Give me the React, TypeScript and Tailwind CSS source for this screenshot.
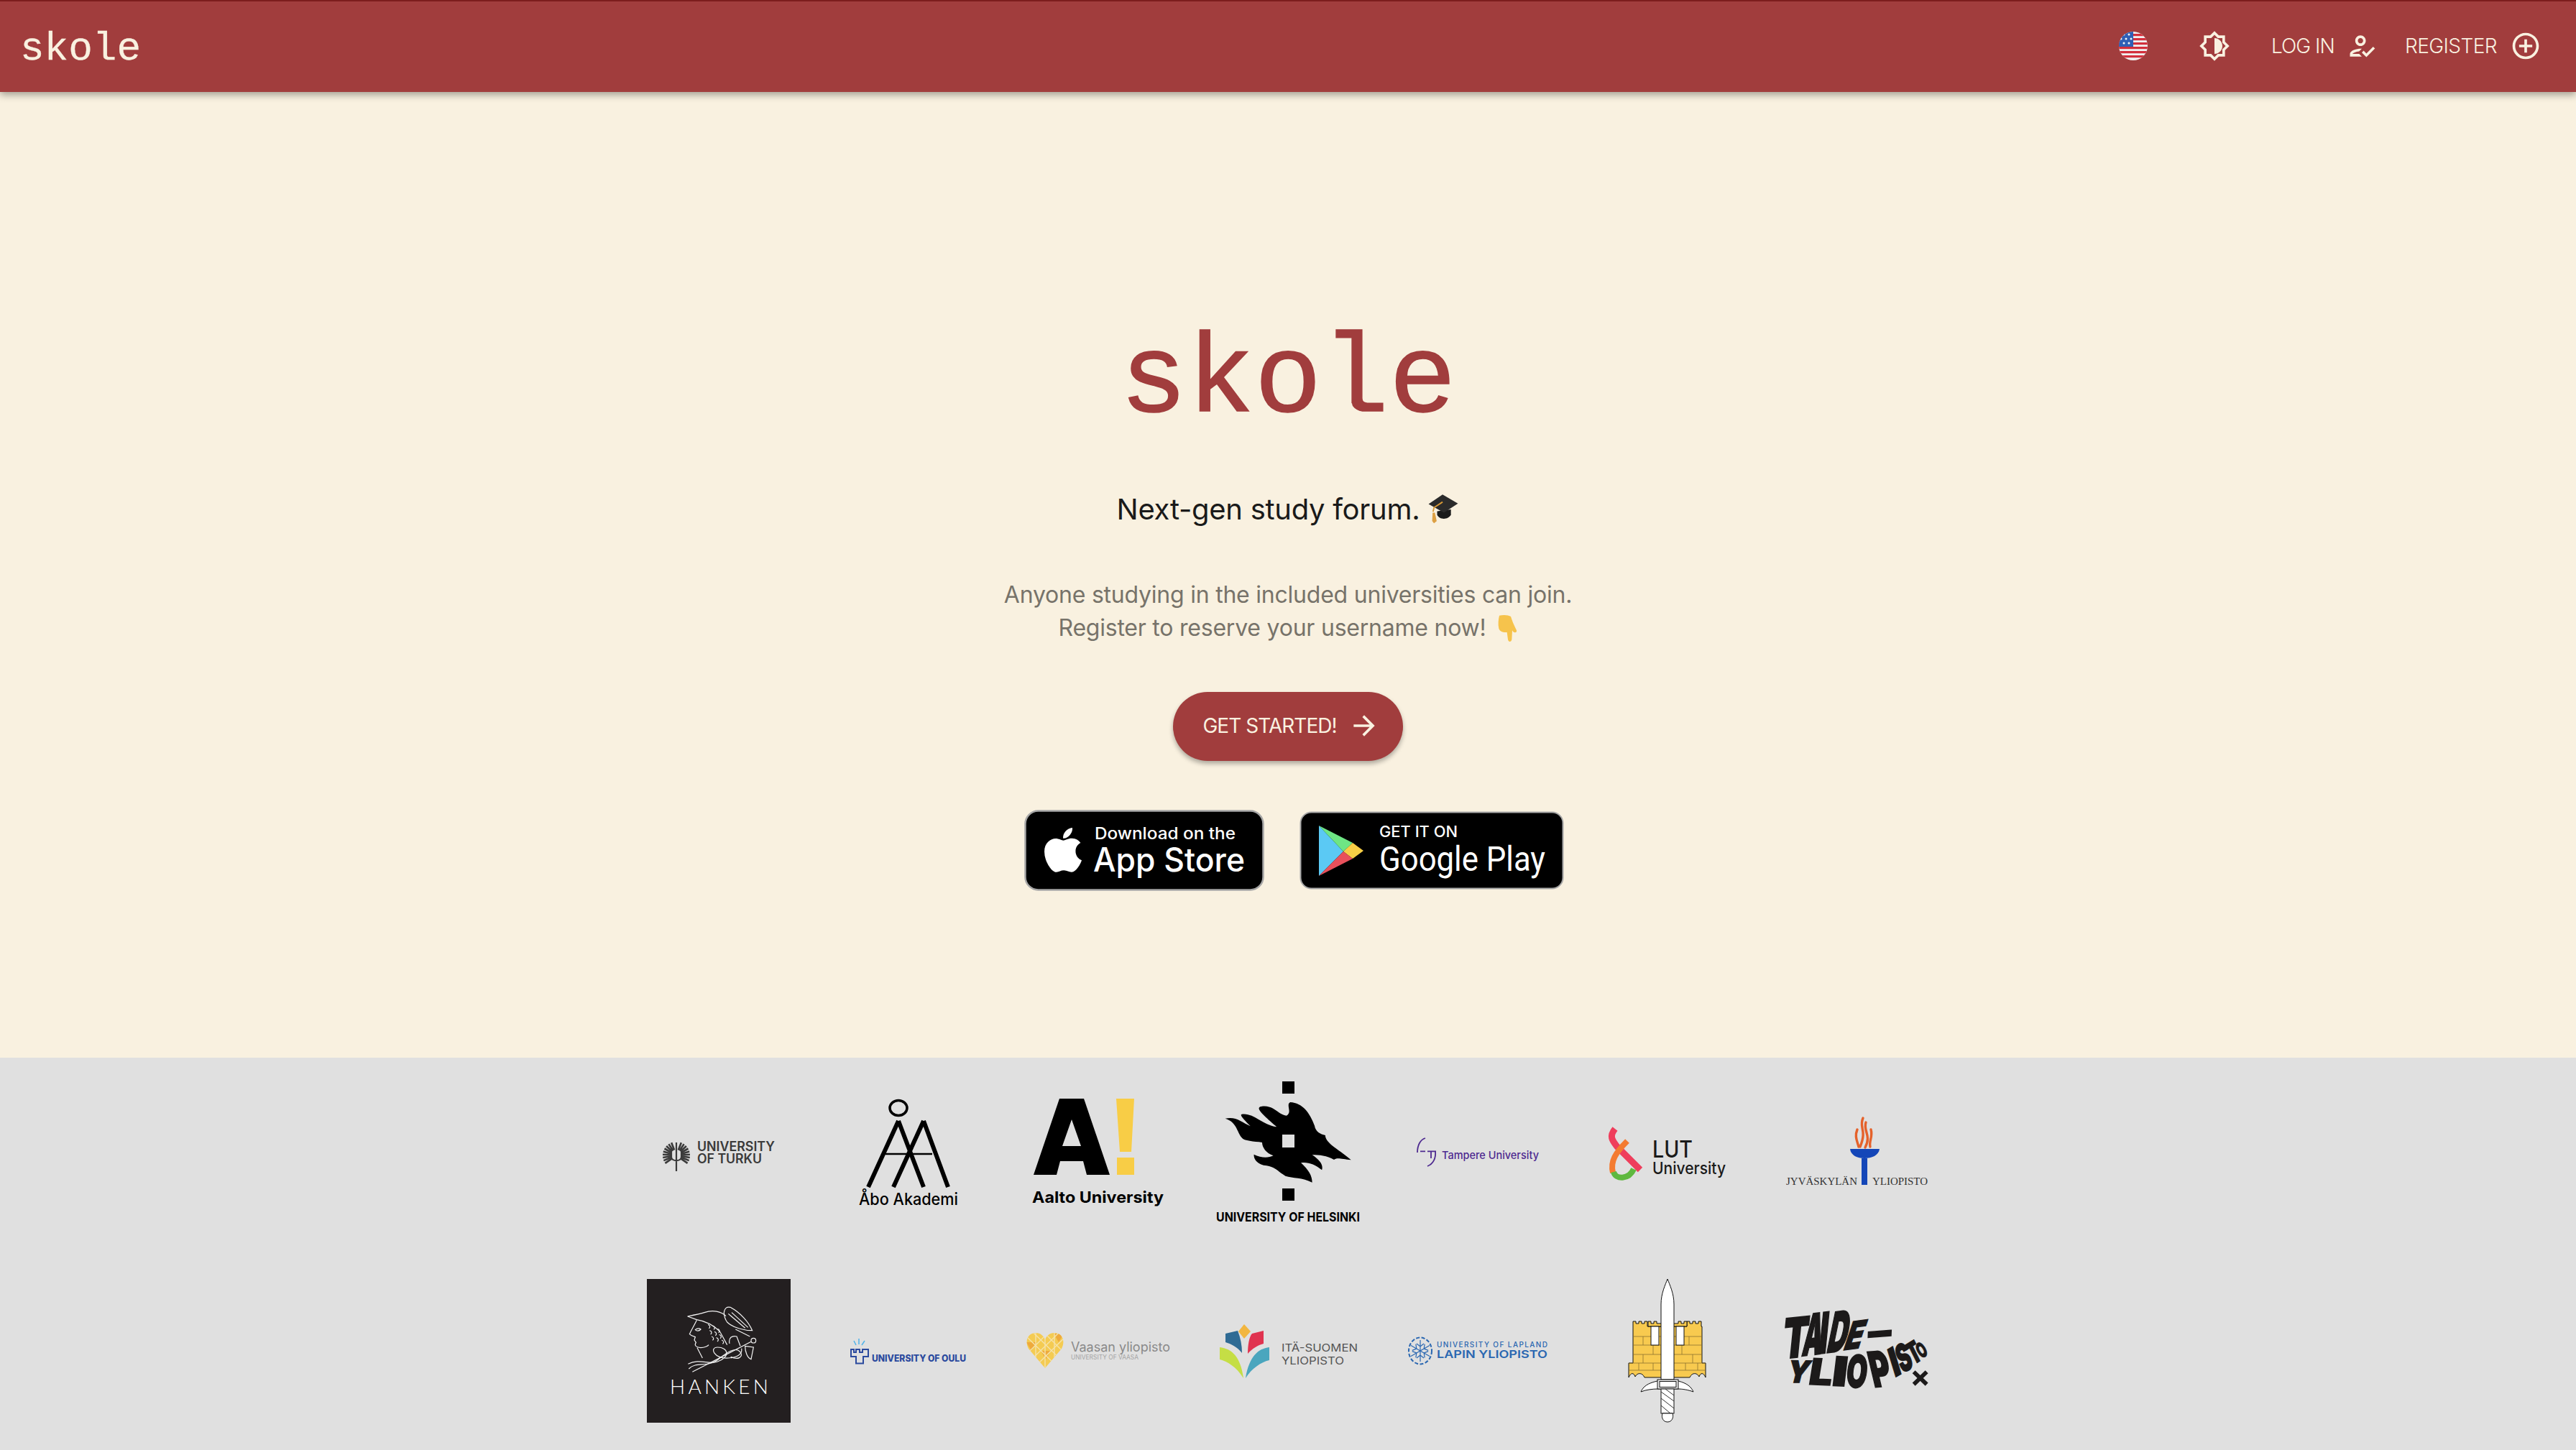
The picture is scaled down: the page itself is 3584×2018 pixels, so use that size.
function MuiIcon({ d, className }: { d: string; className?: string }) {
  return (
    <svg viewBox="0 0 24 24" className={className} fill="currentColor">
      <path d={d} />
    </svg>
  );
}

function FlagIcon() {
  return (
    <svg viewBox="0 0 40 40" className="w-10 h-10">
      <defs>
        <clipPath id="flag-round">
          <circle cx="20" cy="20" r="20" />
        </clipPath>
      </defs>
      <g clipPath="url(#flag-round)">
        <rect width="40" height="40" fill="#f0f0f0" />
        {[3, 9, 15, 21, 27, 33].map((y) => (
          <rect key={y} x="0" y={y} width="40" height="3.2" fill="#d32f3c" />
        ))}
        <rect width="20" height="21" fill="#2f5fb5" />
        {[
          [7, 4], [14, 4], [3, 10], [10, 10], [17, 10], [7, 16], [14, 16],
        ].map(([x, y]) => (
          <circle key={x + "-" + y} cx={x} cy={y} r="1.5" fill="#f4f4f4" />
        ))}
      </g>
    </svg>
  );
}

function CapEmoji() {
  return (
    <svg viewBox="33 18 140 140" className="w-[44px] h-[44px]">
      <path d="M76 96 L76 112 C85 135 125 135 137 112 L137 88 Z" fill="#1b1b1b" />
      <path d="M38 64 L100 22 L168 62 L106 102 Z" fill="#2b2b2b" />
      <path d="M100 55 L62 80 L58 98" fill="none" stroke="#d99a36" strokeWidth="6" />
      <path d="M56 102 L66 102 L74 140 L62 149 L54 140 Z" fill="#dda043" />
    </svg>
  );
}

function HandEmoji() {
  return (
    <svg viewBox="40 22 90 120" className="w-[30px] h-[40px]">
      <path
        d="M52 30 C68 26 90 27 100 34 C104 48 112 68 124 92 C126 100 118 104 110 98 L106 92 L104 130 C102 142 90 142 88 130 L84 100 C70 100 54 98 50 84 C46 66 48 46 52 30 Z"
        fill="#f6c34c"
      />
    </svg>
  );
}

function AppStoreBadge() {
  return (
    <svg width="334" height="113" viewBox="0 0 334 113">
      <rect x="1.5" y="1.5" width="331" height="110" rx="18" fill="#000" stroke="#a6a6a6" strokeWidth="2.5" />
      <path
        transform="translate(27.5 20.6) scale(0.138)"
        fill="#fff"
        d="M318.7 268.7c-.2-36.7 16.4-64.4 50-84.8-18.8-26.9-47.2-41.7-84.7-44.6-35.5-2.8-74.3 20.7-88.5 20.7-15 0-49.4-19.7-76.4-19.7C63.3 141.2 4 184.8 4 273.5q0 39.3 14.4 81.2c12.8 36.7 59 126.7 107.2 125.2 25.2-.6 43-17.9 75.8-17.9 31.8 0 48.3 17.9 76.4 17.9 48.6-.7 90.4-82.5 102.6-119.3-65.2-30.7-61.7-90-61.7-91.9zm-56.6-164.2c27.3-32.4 24.8-61.9 24-72.5-24.1 1.4-52 16.4-67.9 34.9-17.5 19.8-27.8 44.3-25.6 71.9 26.1 2 49.9-11.4 69.5-34.3z"
      />
      <text x="98" y="41" fontSize="23" fontWeight="500" fill="#fff" fontFamily="Inter, sans-serif" textLength="196" lengthAdjust="spacingAndGlyphs">
        Download on the
      </text>
      <text x="96" y="86" fontSize="46" fontWeight="500" fill="#fff" fontFamily="Inter, sans-serif" textLength="211" lengthAdjust="spacingAndGlyphs">
        App Store
      </text>
    </svg>
  );
}

function GooglePlayBadge() {
  return (
    <svg width="368" height="109" viewBox="0 0 368 109">
      <rect x="1.5" y="1.5" width="365" height="106" rx="15" fill="#000" stroke="#a6a6a6" strokeWidth="2" />
      <path d="M27 20 L61 56 L27 90 Z" fill="#5bc9f4" />
      <path d="M27 20 L74 44 L61 56 Z" fill="#6ee584" />
      <path d="M74 44 L89 55 L74 66 L61 56 Z" fill="#f7ce46" />
      <path d="M27 90 L61 56 L74 66 Z" fill="#e8505b" />
      <text x="111" y="36" fontSize="22" fontWeight="500" fill="#fff" fontFamily="Inter, sans-serif" textLength="109" lengthAdjust="spacingAndGlyphs">
        GET IT ON
      </text>
      <text x="111" y="83" fontSize="48" fill="#fff" fontFamily="Roboto, sans-serif" textLength="231" lengthAdjust="spacingAndGlyphs">
        Google Play
      </text>
    </svg>
  );
}

// text inside a logo, stretched to the width it has in the picture
function LogoText({ x, y, w, size, children, color = "#000", weight = 400, font = "Inter, sans-serif", adjust = "spacingAndGlyphs" }: {
  x: number; y: number; w: number; size: number; children: string; color?: string; weight?: number; font?: string;
  adjust?: "spacing" | "spacingAndGlyphs";
}) {
  return (
    <text x={x} y={y} fontSize={size} fontWeight={weight} fill={color} fontFamily={font} textLength={w} lengthAdjust={adjust}>
      {children}
    </text>
  );
}

function TurkuLogo() {
  const angles = [-125, -112, -99, -86, -73, -60, -47, -34, -21, 21, 34, 47, 60, 73, 86, 99, 112, 125];
  return (
    <>
      <g stroke="#3a3a3a" strokeWidth="2.6">
        {angles.map((a) => (
          <line key={a} x1="41" y1="96" x2="41" y2="85" transform={`rotate(${a} 41 104)`} />
        ))}
      </g>
      <path d="M41 86 V126 M34 94 V106 C34 113 48 113 48 106 V94" fill="none" stroke="#3a3a3a" strokeWidth="2.2" />
      <LogoText x={70} y={98} w={108} size={18} weight={600} color="#3a3a3a">UNIVERSITY</LogoText>
      <LogoText x={70} y={115} w={90} size={18} weight={600} color="#3a3a3a">OF TURKU</LogoText>
    </>
  );
}

function AboLogo() {
  return (
    <>
      <ellipse cx="86" cy="38" rx="12" ry="10.5" fill="none" stroke="#000" strokeWidth="3.5" />
      <path d="M86 56 L44 148 M86 56 L121 148 M121 56 L79 148 M121 56 L155 148" stroke="#000" strokeWidth="6" />
      <path d="M68 102 H133" stroke="#000" strokeWidth="2.5" />
      <LogoText x={31} y={173} w={138} size={23} weight={500}>Åbo Akademi</LogoText>
    </>
  );
}

function AaltoLogo() {
  return (
    <>
      <path
        fillRule="evenodd"
        d="M46 25 H80 L116 131 H84 L79 112 H47 L42 131 H10 Z M63 54 L50 91 H76 Z"
        fill="#000"
      />
      <path d="M125 25 H150 L146 99 H130 Z M126 107 H150 V131 H126 Z" fill="#f8cd46" />
      <LogoText x={8} y={170} w={183} size={22} weight={700}>Aalto University</LogoText>
    </>
  );
}

function HelsinkiLogo() {
  return (
    <>
      <rect x="92" y="1" width="17" height="17" fill="#000" />
      <rect x="92" y="150" width="17" height="17" fill="#000" />
      <g transform="translate(-32 -24) scale(0.676 0.3333)">
        <path
          d="M66 230 C88 220 100 245 118 262 C105 235 95 215 100 212 C125 205 140 255 172 265 C150 225 125 185 140 180 C165 170 175 215 192 218 C205 205 190 170 200 162 C225 165 240 205 250 260 C252 285 262 295 272 300 C272 335 305 365 325 403 C305 398 295 392 290 402 C275 385 260 382 245 382 C262 405 268 425 265 445 C250 420 235 410 222 415 C238 445 245 470 245 497 C225 475 205 480 190 470 C170 445 170 430 145 425 C130 415 125 400 125 380 C140 395 155 395 165 385 C150 375 142 350 142 330 C125 325 105 325 100 310 C90 285 90 245 66 230 Z"
          fill="#000"
        />
      </g>
      <rect x="92" y="75" width="17" height="18" fill="#e0e0e0" />
      <LogoText x={0} y={196} w={200} size={18} weight={700}>UNIVERSITY OF HELSINKI</LogoText>
    </>
  );
}

function TampereLogo() {
  return (
    <>
      <g fill="none" stroke="#4e2a90" strokeWidth="1.8">
        <path d="M27 80 C20 82 16 90 16 100" />
        <path d="M20 98.3 H27 M30 98.3 H42 M35 98.3 V108" />
        <path d="M41 98.3 C42 108 38 116 30 119" />
      </g>
      <LogoText x={50} y={109} w={135} size={15} weight={500} color="#4e2a90">Tampere University</LogoText>
    </>
  );
}

function LutLogo() {
  return (
    <>
      <path d="M27 67 C18 78 24 84 30 92 L62 124" fill="none" stroke="#ef3e5c" strokeWidth="9" />
      <path d="M44 84 C28 100 20 112 24 128" fill="none" stroke="#f47b30" strokeWidth="8" />
      <path d="M25 127 C28 138 46 138 53 123" fill="none" stroke="#5fb83f" strokeWidth="8" />
      <LogoText x={79} y={107} w={56} size={32} weight={500} color="#1a1a1a">LUT</LogoText>
      <LogoText x={79} y={130} w={102} size={23} weight={500} color="#1a1a1a">University</LogoText>
    </>
  );
}

function JyvaskylaLogo() {
  return (
    <>
      <g fill="none" stroke="#e5622b" strokeWidth="3.4" strokeLinecap="round">
        <path d="M108 52 C102 66 114 68 104 92" />
        <path d="M112 58 C108 70 120 76 111 93" />
        <path d="M119 68 C122 78 116 84 118 92" />
        <path d="M100 68 C96 78 100 84 102 92" />
      </g>
      <path d="M90 95 H131 C130 104 120 108 110 108 C100 108 91 104 90 95 Z" fill="#1446b8" />
      <rect x="106" y="108" width="8" height="37" fill="#1446b8" />
      <LogoText x={1} y={145} w={99} size={15.5} color="#333" font="'Liberation Serif', serif">JYVÄSKYLÄN</LogoText>
      <LogoText x={121} y={145} w={77} size={15.5} color="#333" font="'Liberation Serif', serif">YLIOPISTO</LogoText>
    </>
  );
}

function HankenLogo() {
  return (
    <>
      <rect width="200" height="200" fill="#231f20" />
      <g transform="translate(30 30) scale(0.3333)" fill="none" stroke="#f2f2f2" strokeWidth="3.6">
        <path d="M80 66 L118 80 C150 85 185 100 215 130 L245 185" />
        <path d="M80 66 C110 60 135 55 150 50 C185 38 220 45 240 65" />
        <path d="M232 50 C235 30 245 25 258 28 C300 50 335 90 350 125 C320 125 270 115 245 90 C235 75 232 60 232 50 Z" />
        <path d="M250 55 L320 115 M264 50 L332 112" />
        <path d="M118 82 C110 100 100 115 88 140 C95 148 105 150 112 152 L108 165 L115 175 C108 185 112 195 135 197 C150 197 165 190 168 185" />
        <path d="M112 122 C120 115 130 115 135 120 C128 128 118 128 112 122 Z" />
        <path d="M120 197 L142 240" />
        <path d="M165 100 c10 3 10 12 4 16 M185 105 c10 3 10 12 4 16 M205 118 c10 3 10 12 4 16 M172 125 c10 3 10 12 4 16 M192 130 c10 3 10 12 4 16 M212 142 c10 3 10 12 4 16 M180 150 c10 3 10 12 4 16 M200 155 c10 3 10 12 4 16 M222 165 c10 3 10 12 4 16" />
        <path d="M100 298 L345 172" />
        <circle cx="355" cy="167" r="10" />
        <path d="M82 265 C130 240 170 270 205 255 C260 235 250 195 205 195 C170 195 190 245 250 240 C285 238 310 225 305 200" />
        <path d="M85 285 C120 250 165 285 215 240 C240 220 280 190 300 215 C315 235 290 250 260 235" />
        <path d="M280 120 L340 150 M255 180 C250 155 265 145 285 150 L300 190 M320 190 L355 195 L345 245 C330 240 320 215 320 190 Z" />
      </g>
      <LogoText x={32} y={160} w={137} size={28} weight={300} color="#fff" font="Lato, sans-serif" adjust="spacing">HANKEN</LogoText>
    </>
  );
}

function OuluLogo() {
  return (
    <>
      <path d="M20 98 H24 V102 H27 V98 H32 V102 H36 V98 H44 V108 H37 V117.5 H27 V108 H20 Z" fill="none" stroke="#2b4a9e" strokeWidth="2" />
      <path d="M24 86 L27 92 M31 83 V91 M39 86 L35 92" stroke="#4fb3ea" strokeWidth="1.5" />
      <LogoText x={49} y={115} w={131} size={12.5} weight={800} color="#2b4a9e">UNIVERSITY OF OULU</LogoText>
    </>
  );
}

function VaasaLogo() {
  return (
    <>
      <defs>
        <clipPath id="vaasa-heart">
          <path d="M26 124 L3 97 C-3 85 3 75 13 75 C20 75 25 80 26 85 C27 80 32 75 39 75 C49 75 55 85 49 97 Z" />
        </clipPath>
      </defs>
      <g clipPath="url(#vaasa-heart)">
        <rect width="60" height="130" y="0" fill="#f4cb52" />
        <path d="M0 88 H14 L7 100 Z M38 76 H52 L45 88 Z M20 100 H34 L27 112 Z" fill="#eeaa3c" />
        <g stroke="#f5e2a8" strokeWidth="1.4">
          <path d="M-5 75 L45 124 M10 75 L60 124 M-15 85 L35 135 M25 75 L65 115" />
          <path d="M60 75 L10 124 M45 75 L-5 124 M30 75 L-15 120 M65 90 L25 130" />
          <path d="M13 70 V130 M26 70 V130 M39 70 V130" />
        </g>
      </g>
      <LogoText x={62} y={101} w={138} size={18} color="#8a8a8a">Vaasan yliopisto</LogoText>
      <LogoText x={62} y={112} w={94} size={9} color="#a5a5a5">UNIVERSITY OF VAASA</LogoText>
    </>
  );
}

function ItaSuomenLogo() {
  return (
    <>
      <path d="M39 63 L48 73 L39 83 L31 73 Z" fill="#f2b63f" />
      <path d="M13 76 L30 72 C34 82 36 92 36 103 C30 95 20 90 13 88 Z" fill="#2f6b94" />
      <path d="M66 72 L66 90 C58 92 50 97 44 104 C44 92 46 80 50 76 Z" fill="#e0334f" />
      <path d="M5 95 C22 97 34 108 38 138 C28 122 16 115 5 112 Z" fill="#c5de45" />
      <path d="M74 95 C58 97 46 108 41 138 C50 124 62 116 74 113 Z" fill="#4aa6be" />
      <LogoText x={91} y={101} w={106} size={15} color="#555">ITÄ-SUOMEN</LogoText>
      <LogoText x={91} y={119} w={87} size={15} color="#555">YLIOPISTO</LogoText>
    </>
  );
}

function LapinLogo() {
  return (
    <>
      <g fill="none" stroke="#2a67b1" strokeWidth="1.2">
        <ellipse cx="20" cy="100" rx="16" ry="18.5" strokeDasharray="5 2.5" strokeWidth="2" />
        {[0, 60, 120, 180, 240, 300].map((a) => (
          <path key={a} transform={`rotate(${a} 20 100)`} d="M20 100 V85 M15 90 L20 94 L25 90" />
        ))}
      </g>
      <LogoText x={43} y={95} w={154} size={10} weight={500} color="#2a67b1" adjust="spacing">UNIVERSITY OF LAPLAND</LogoText>
      <LogoText x={43} y={110} w={154} size={15} weight={600} color="#2a67b1">LAPIN YLIOPISTO</LogoText>
    </>
  );
}

function SwordLogo() {
  return (
    <g stroke="#111" strokeWidth="1">
      <path
        d="M52 59 H56 V62 H60 V59 H64 V62 H68 V59 H72 V66 H127 V59 H131 V62 H135 V59 H139 V62 H143 V59 H147 V66 H148 V117 H153 V137 C150 130 146 130 144 136 C141 130 134 130 131 137 H68 C65 130 58 130 55 136 C53 130 49 130 46 137 V117 H52 Z"
        fill="#f8ca4f"
      />
      <path d="M73 59 V66 H127 V59 H123 V62 H119 V59 H115 V62 H85 V59 H81 V62 H77 V59 Z" fill="#f8ca4f" />
      <g fill="none" stroke="#8b7230" strokeWidth="0.8">
        <path d="M52 80 H148 M52 92 H148 M52 105 H148 M46 117 H153 M46 127 H153 M66 80 V92 M80 92 V105 M66 105 V117 M130 80 V92 M120 92 V105 M135 105 V117 M60 117 V127 M80 117 V127 M125 117 V127 M142 117 V127" />
      </g>
      <rect x="77" y="66" width="11" height="26" fill="#fff" />
      <rect x="112" y="66" width="11" height="26" fill="#fff" />
      <path d="M100 0 C103 8 109 20 109 35 V140 H91 V35 C91 20 97 8 100 0 Z" fill="#fff" />
      <path d="M63 157 C66 150 72 145 86 142 H115 C127 145 133 150 136 157 C128 154 120 153 115 153 H86 C80 153 70 154 63 157 Z" fill="#fff" />
      <rect x="86" y="140" width="29" height="13" fill="#ececec" />
      <rect x="89" y="142.5" width="23" height="8" fill="#fff" />
      <rect x="91" y="153" width="18" height="34" fill="#fff" />
      <path d="M91 157 L109 170 M91 166 L109 180 M91 176 L104 187 M97 153 L109 162" fill="none" stroke="#333" />
      <path d="M93 187 H107 C109 193 106 199 100 199 C94 199 91 193 93 187 Z" fill="#fff" />
    </g>
  );
}

// every letter stretched between three corners of its box, as the logo warps its letters
const taideLetters: [string, number, number, number, number, number, number][] = [
  ["T", 25, 243, 131, 232, 42, 75],
  ["A", 108, 232, 190, 222, 131, 58],
  ["I", 178, 222, 214, 218, 195, 50],
  ["D", 210, 218, 292, 208, 245, 48],
  ["E", 280, 208, 352, 198, 320, 88],
  ["-", 370, 190, 498, 180, 375, 75],
  ["Y", 42, 342, 134, 343, 65, 250],
  ["L", 135, 350, 232, 354, 153, 240],
  ["I", 232, 355, 296, 358, 247, 232],
  ["O", 290, 358, 376, 368, 307, 222],
  ["P", 412, 362, 495, 355, 377, 215],
  ["I", 498, 322, 530, 303, 463, 208],
  ["S", 530, 305, 580, 275, 490, 198],
  ["T", 575, 270, 620, 242, 535, 190],
  ["O", 610, 245, 642, 222, 578, 190],
];

function TaideLogo() {
  return (
    <g transform="translate(-14 30) scale(0.3333)">
      {taideLetters.map(([c, blx, bly, brx, bry, tlx, tly], i) => (
        <text
          key={i}
          fontSize="100"
          fontWeight="900"
          fontFamily="Inter, sans-serif"
          fill="#1c1a1a"
          stroke="#1c1a1a"
          strokeWidth="3"
          textLength="100"
          lengthAdjust="spacingAndGlyphs"
          transform={`matrix(${(brx - blx) / 100} ${(bry - bly) / 100} ${(blx - tlx) / 73} ${(bly - tly) / 73} ${blx} ${bly})`}
        >
          {c}
        </text>
      ))}
      <path d="M578 298 L632 350 M632 298 L578 350" stroke="#1c1a1a" strokeWidth="17" />
    </g>
  );
}

const logos = [
  TurkuLogo, AboLogo, AaltoLogo, HelsinkiLogo, TampereLogo, LutLogo, JyvaskylaLogo,
  HankenLogo, OuluLogo, VaasaLogo, ItaSuomenLogo, LapinLogo, SwordLogo, TaideLogo,
];

export default function App() {
  return (
    <div className="h-screen overflow-hidden flex flex-col bg-[#e0e0e0] font-['Inter',sans-serif]">
      <header className="relative z-10 h-[128px] shrink-0 flex items-center justify-between border-t-2 border-[#7c1d1d] bg-[#a13d3d] pb-[2px] pl-[28px] pr-[48px] text-[#f9f1e0] shadow-[0_4px_10px_rgba(0,0,0,0.35)]">
        <span className="mt-[7px] font-['Liberation_Mono',monospace] text-[56px] leading-none [-webkit-text-stroke:0.3px_#f9f1e0]">skole</span>
        <nav className="flex items-center text-[28px] font-light">
          <FlagIcon />
          <MuiIcon
            className="ml-[71px] w-[44px] h-[44px]"
            d="M20 15.31L23.31 12 20 8.69V4h-4.69L12 .69 8.69 4H4v4.69L.69 12 4 15.31V20h4.69L12 23.31 15.31 20H20v-4.69zm-2-.83V18h-3.52L12 20.48 9.52 18H6v-3.52L3.52 12 6 9.52V6h3.52L12 3.52 14.48 6H18v3.52L20.48 12 18 14.48zM12 6v12c3.31 0 6-2.69 6-6s-2.69-6-6-6z"
          />
          <span className="ml-[57px] w-[85px] whitespace-nowrap tracking-[-0.035em]">LOG IN</span>
          <MuiIcon
            className="ml-[19px] w-[44px] h-[44px]"
            d="M11 12c2.21 0 4-1.79 4-4s-1.79-4-4-4-4 1.79-4 4 1.79 4 4 4zm0-6c1.1 0 2 .9 2 2s-.9 2-2 2-2-.9-2-2 .9-2 2-2zM5 18c.2-.63 2.57-1.68 4.96-1.94l2.04-2c-.39-.04-.68-.06-1-.06-2.67 0-8 1.34-8 4v2h9l-2-2H5zm15.6-5.5l-5.13 5.17-2.07-2.08L12 17l3.47 3.5L22 13.91z"
          />
          <span className="ml-[38px] w-[129px] whitespace-nowrap tracking-[-0.02em]">REGISTER</span>
          <MuiIcon
            className="ml-[17px] w-[44px] h-[44px]"
            d="M13 7h-2v4H7v2h4v4h2v-4h4v-2h-4V7zm-1-5C6.48 2 2 6.48 2 12s4.48 10 10 10 10-4.48 10-10S17.52 2 12 2zm0 18c-4.41 0-8-3.59-8-8s3.59-8 8-8 8 3.59 8 8-3.59 8-8 8z"
          />
        </nav>
      </header>

      <main className="h-[1344px] shrink-0 flex flex-col items-center bg-[#f9f1e0]">
        <h1 className="mt-[325px] font-['Liberation_Mono',monospace] text-[156px] leading-none text-[#a13d3d] [-webkit-text-stroke:1.5px_#a13d3d]">skole</h1>
        <div className="mt-[76px] flex h-[48px] items-center gap-[11px] text-[40px] leading-[48px] tracking-[-0.007em] text-[#1a1a1a]">
          <span>Next-gen study forum.</span>
          <CapEmoji />
        </div>
        <div className="mt-[72px] text-center text-[32px] leading-[46px] tracking-[-0.007em] text-[#77736a]">
          <p>Anyone studying in the included universities can join.</p>
          <p className="flex items-center justify-center gap-[14px]">
            <span>Register to reserve your username now!</span>
            <HandEmoji />
          </p>
        </div>
        <button className="mt-[66px] flex h-[96px] w-[320px] items-center justify-center gap-[16px] rounded-full bg-[#a13d3d] pb-[2px] pl-[9px] text-[28px] text-[#f9f1e0] shadow-[0_4px_6px_rgba(0,0,0,0.3)]">
          <span className="whitespace-nowrap tracking-[-0.035em]">GET STARTED!</span>
          <MuiIcon className="h-[44px] w-[44px] shrink-0" d="M12 4l-1.41 1.41L16.17 11H4v2h12.17l-5.58 5.59L12 20l8-8z" />
        </button>
        <div className="mt-[68px] flex items-center gap-[49px] pl-[17px]">
          <AppStoreBadge />
          <GooglePlayBadge />
        </div>
      </main>

      <section className="grid grid-cols-[repeat(7,200px)] justify-center gap-x-16 gap-y-[76px] pt-8">
        {logos.map((Logo, i) => (
          <svg key={i} width="200" height="200" viewBox="0 0 200 200" className="overflow-visible">
            <Logo />
          </svg>
        ))}
      </section>
    </div>
  );
}
